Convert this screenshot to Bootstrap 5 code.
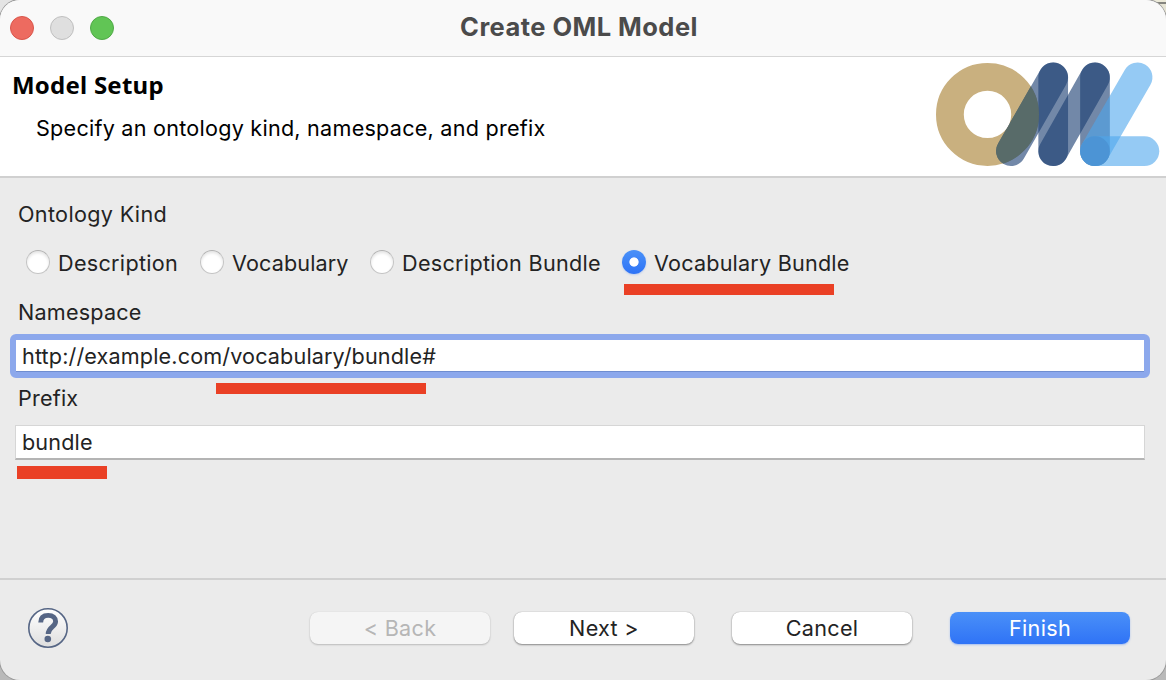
<!DOCTYPE html>
<html lang="en">
<head>
<meta charset="utf-8">
<meta name="viewport" content="width=device-width, initial-scale=1">
<title>Create OML Model</title>
<link href="https://cdn.jsdelivr.net/npm/bootstrap@5.3.0/dist/css/bootstrap.min.css" rel="stylesheet">
<style>
  body { width:1166px; height:680px; overflow:hidden; background:linear-gradient(90deg,#e4e4e4 50%,transparent 50%) top/100% 60px no-repeat,linear-gradient(#ecead9 0 2px,#85857f 2px 4px,#e6e4d4 4px 60px,#b9b9b9 60px); font-family:Inter,"Liberation Sans",sans-serif; font-size:21.6px; line-height:30px; color:#232323; }
  .dialog { width:1166px; height:680px; border-radius:20px; background:#ebebeb; box-shadow:0 0 0 1px #9a9a9a; overflow:hidden; }
  .titlebar { height:57px; background:#f9f9f9; border-bottom:1px solid #d6d6d6; padding-left:10px; }
  .titlebar h1 { left:0; right:0; top:12px; padding-right:8px; font-size:25.5px; line-height:30px; letter-spacing:.45px; font-weight:700; color:#4b4b4b; }
  .light { width:24px; height:24px; border-radius:50%; border:1px solid #d9564b; background:#ed6b60; }
  .light.idle { background:#dfdfdf; border-color:#bfbfbf; }
  .light.zoomer { background:#61c555; border-color:#50a947; }
  .banner { height:121px; border-bottom:2px solid #d0d0d0; color:#000; }
  .banner h2 { font:700 24px/32px "Noto Sans","Open Sans",sans-serif; letter-spacing:.23px; margin:12px 0 0 12px; }
  .banner p { margin:12px 0 0 36px; letter-spacing:.24px; }
  .form-area { height:400px; padding-top:21px; }
  .caption { display:block; padding-left:18px; height:30px; letter-spacing:.2px; }
  .kinds { height:24px; margin:21px 0 23px 26px; }
  .kinds .dot { width:24px; height:24px; margin:0 8px 0 0; border:1px solid #c4c4c4; border-top-color:#b0b0b0; background:#fff; box-shadow:inset 0 2px 3px #0000001c; }
  .kinds .dot:checked { border:0; background:radial-gradient(circle,#fff 0 4.2px,transparent 5px),linear-gradient(#4a91f8,#2e73f6); box-shadow:0 1px 2px #2e73f640; }
  .kind { height:24px; letter-spacing:.3px; }
  .kind label { line-height:26px; white-space:nowrap; }
  .entry.form-control { width:1130px; height:35px; margin:12px 0 0 15px; padding:0 6px; border:1px solid #d6d6d6; border-bottom:2px solid #b4b4b4; border-radius:0; font-size:inherit; color:#232323; background:#fff; line-height:32px; letter-spacing:.14px; }
  .entry.active { width:1140px; height:44px; margin:7px 0 5px 10px; border:6px solid #8ca8ec; border-radius:6px; box-shadow:inset 0 -1px #6f8dd0; }
  .strike { background:#ea4025; height:11px; width:210px; }
  .actions { height:102px; border-top:2px solid #d0d0d0; padding:28px 36px 0 28px; }
  .push.btn { width:180px; height:32px; margin-top:4px; border:0; border-radius:8px; padding:0; font-size:inherit; line-height:33px; letter-spacing:.3px; background:#fff; color:#232323; box-shadow:0 0 1px #0005,0 1px 2px #0006; }
  .push.btn:disabled { background:#f5f5f5; color:#b6b6b6; opacity:1; box-shadow:0 0 1px #0002,0 1px 2px #0003; }
  .push.btn.go { background:linear-gradient(#4a90f8,#2f73f6); color:#fff; box-shadow:0 1px 2px #2f73f660; }
</style>
</head>
<body>
<main class="dialog d-flex flex-column">
  <header class="titlebar d-flex align-items-center position-relative flex-shrink-0">
    <div class="d-flex" style="gap:16px"><span class="light"></span><span class="light idle"></span><span class="light zoomer"></span></div>
    <h1 class="position-absolute text-center m-0">Create OML Model</h1>
  </header>
  <section class="banner bg-white d-flex justify-content-between flex-shrink-0">
    <div>
      <h2>Model Setup</h2>
      <p>Specify an ontology kind, namespace, and prefix</p>
    </div>
    <svg width="231" height="119" viewBox="935 57 231 119" fill="none" stroke-linecap="round" stroke-width="29.7">
      <clipPath id="slant"><rect x="996.15" y="62.3" width="29.7" height="114.7" rx="14.85" transform="translate(0 -.2) rotate(29.76 1011 151) translate(0 -11)"/></clipPath>
      <circle cx="987.5" cy="114.4" r="37.6" stroke="#c9b07f" stroke-width="27.8"/>
      <g stroke="#1a3e72" stroke-opacity=".617">
        <path d="M1011 151.2 1053.2 77.4"/><path d="M1053.2 77.4V151.2"/><path d="M1053.2 151.2 1095 77.4"/><path d="M1095 77.4V151.2"/>
      </g>
      <circle cx="987.5" cy="114.4" r="37.6" stroke="#586b69" stroke-width="27.8" clip-path="url(#slant)"/>
      <g stroke="#4da6ec" stroke-opacity=".596"><path d="M1095 151.2 1137.6 77.4"/><path d="M1095 151.2H1144.4"/></g>
      <circle cx="1095" cy="151.2" r="14.85" fill="#4a90d0" stroke="none" fill-opacity=".75"/>
    </svg>
  </section>
  <section class="form-area flex-shrink-0">
    <div class="caption" style="letter-spacing:.33px">Ontology Kind</div>
    <div class="kinds d-flex">
      <div class="kind d-flex" style="width:174px"><input class="form-check-input dot" type="radio" name="kind" id="k1"><label for="k1">Description</label></div>
      <div class="kind d-flex" style="width:170px;letter-spacing:.12px"><input class="form-check-input dot" type="radio" name="kind" id="k2"><label for="k2">Vocabulary</label></div>
      <div class="kind d-flex" style="width:252px"><input class="form-check-input dot" type="radio" name="kind" id="k3"><label for="k3">Description Bundle</label></div>
      <div class="kind d-flex position-relative" style="letter-spacing:.2px"><input class="form-check-input dot" type="radio" name="kind" id="k4" checked><label for="k4">Vocabulary Bundle</label>
        <span class="strike position-absolute" style="left:2px;top:34px"></span></div>
    </div>
    <label class="caption" for="ns">Namespace</label>
    <div class="position-relative"><input class="form-control entry active" id="ns" type="text" value="http://example.com/vocabulary/bundle#"><span class="strike position-absolute" style="left:216px;top:49px"></span></div>
    <label class="caption" for="px">Prefix</label>
    <div class="position-relative"><input class="form-control entry" id="px" type="text" value="bundle"><span class="strike position-absolute" style="left:17px;top:41px;width:90px;height:13px"></span></div>
  </section>
  <footer class="actions d-flex align-items-start flex-shrink-0">
    <svg width="40" height="40" viewBox="0 0 40 40" style="margin-right:242px" class="flex-shrink-0">
      <defs><linearGradient id="glass" x2="0" y2="1"><stop stop-color="#fff"/><stop offset="1" stop-color="#dedede"/></linearGradient></defs>
      <circle cx="20" cy="20" r="19.2" fill="url(#glass)" stroke="#566685" stroke-width="1.6"/>
      <path d="M12.7 14.6C12.7 9.8 15.4 7.4 20.2 7.4S27.6 9.8 27.6 13.6C27.6 19 20.2 19 20.2 26" fill="none" stroke="#566685" stroke-width="4.9"/>
      <circle cx="19.8" cy="31" r="3.3" fill="#566685"/>
    </svg>
    <button class="btn push" disabled>&lt; Back</button>
    <button class="btn push" style="margin-left:24px">Next &gt;</button>
    <button class="btn push" style="margin-left:38px">Cancel</button>
    <button class="btn push go" style="margin-left:38px">Finish</button>
  </footer>
</main>
<script src="https://cdn.jsdelivr.net/npm/bootstrap@5.3.0/dist/js/bootstrap.bundle.min.js"></script>
</body>
</html>
